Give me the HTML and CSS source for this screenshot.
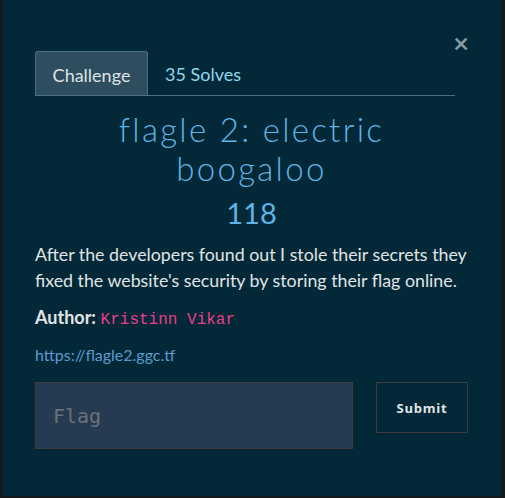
FILE: index.html
```html
<!DOCTYPE html>
<html>
<head>
<meta charset="utf-8">
<link rel="stylesheet" href="styles.css">
</head>
<body>
<div class="modal">
  <button class="close" aria-label="Close">&times;</button>
  <div class="tabs">
    <div class="tab active">Challenge</div>
    <div class="tab">35 Solves</div>
  </div>
  <h2 class="title">flagle 2: electric boogaloo</h2>
  <div class="points">118</div>
  <p class="desc">After the developers found out I stole their secrets they fixed the website's security by storing their flag online.</p>
  <p class="author"><b>Author:</b> <code>Kristinn Vikar</code></p>
  <a class="link" href="#">https://flagle2.ggc.tf</a>
  <div class="form">
    <input class="flag" type="text" placeholder="Flag">
    <button class="submit">Submit</button>
  </div>
</div>
</body>
</html>
```
FILE: styles.css
```css
html, body {
  margin: 0;
  padding: 0;
  background: #151a1c;
  height: 498px;
  overflow: hidden;
}
.modal {
  position: relative;
  margin-left: 3px;
  width: 498px;
  height: 496px;
  background: #032837;
  box-sizing: border-box;
  padding: 51px 33px 0 32px;
  font-family: "Lato", "Liberation Sans", sans-serif;
  color: #e1e4e6;
}
.close {
  position: absolute;
  top: 27px;
  right: 32px;
  background: none;
  border: 0;
  color: #8a9aa3;
  font-size: 27px;
  font-weight: 700;
  font-family: "Lato", sans-serif;
  line-height: 32px;
  padding: 0;
  cursor: pointer;
}
.tabs {
  display: flex;
  border-bottom: 1px solid #4a7084;
  height: 44px;
  margin-right: 13px;
}
.tab {
  padding: 0 17px;
  line-height: 46px;
  font-size: 18px;
  color: #8fd8f0;
  box-sizing: border-box;
}
.tab.active {
  background: #2e4d5e;
  border: 1px solid #4a7084;
  border-bottom: 0;
  border-radius: 3px 3px 0 0;
  color: #dde3e6;
  width: 113px;
  text-align: center;
  padding: 0;
  line-height: 46px;
}
.title {
  margin: 14px 0 0;
  text-align: center;
  font-weight: 300;
  font-size: 33px;
  letter-spacing: 2.3px;
  line-height: 39px;
  color: #5fb3e6;
  padding: 0 40px;
}
.points {
  text-align: center;
  font-size: 29px;
  color: #5fb3e6;
  line-height: 36px;
  margin-top: 7px;
}
.desc {
  margin: 10px -6px 0 0;
  font-size: 17.8px;
  line-height: 26px;
  color: #e1e4e6;
}
.author {
  margin: 11px 0 0;
  font-size: 18px;
  line-height: 26px;
}
.author b { font-weight: 700; }
.author code {
  font-family: "Liberation Mono", "DejaVu Sans Mono", monospace;
  color: #e83e8c;
  font-size: 16px;
}
.link {
  display: block;
  margin-top: 12px;
  font-size: 16px;
  color: #5b9bcf;
  text-decoration: none;
  line-height: 20px;
}
.form {
  display: flex;
  justify-content: space-between;
  margin-top: 17px;
  align-items: flex-start;
}
.flag {
  width: 318px;
  height: 67px;
  box-sizing: border-box;
  background: #263a52;
  border: 1px solid #3d3d3d;
  padding: 0 17px;
  font-family: "DejaVu Sans Mono", monospace;
  font-size: 20px;
  color: #ccc;
  outline: none;
}
.flag::placeholder { color: #6b7278; }
.submit {
  width: 92px;
  height: 51px;
  box-sizing: border-box;
  background: transparent;
  border: 1px solid #3d3d3d;
  color: #e1e4e6;
  font-family: "Open Sans", "Lato", sans-serif;
  font-weight: 700;
  font-size: 13px;
  letter-spacing: 0.8px;
  cursor: pointer;
}
```
